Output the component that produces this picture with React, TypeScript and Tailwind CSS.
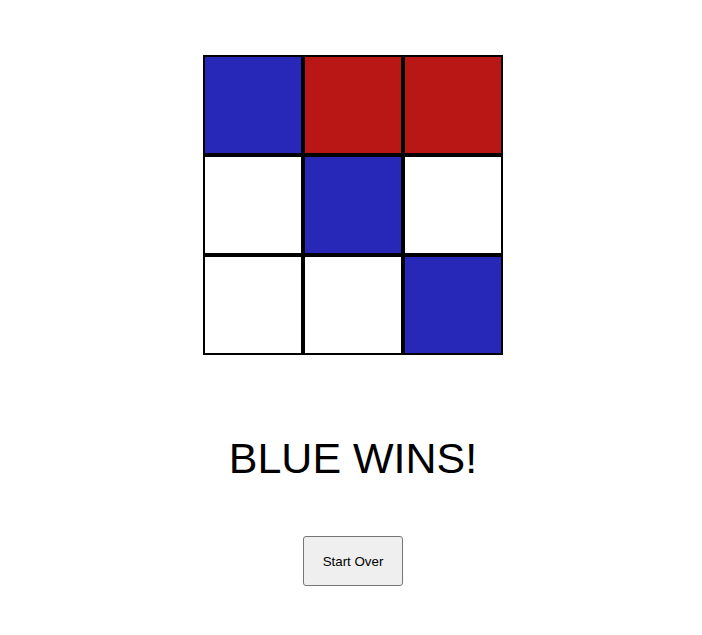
import React from "react";

const cells = ["blue", "red", "red", "", "blue", "", "", "", "blue"];

export default function App() {
  return (
    <div className="min-h-[635px] w-full bg-white flex flex-col items-center pt-[55px] pl-[4px]" style={{ fontFamily: '"Liberation Sans", Arial, sans-serif' }}>
      <div className="grid grid-cols-[100px_100px_100px] grid-rows-[100px_100px_100px]">
        {cells.map((c, i) => (
          <div
            key={i}
            className={
              "box-border border-2 border-black " +
              (c === "blue" ? "bg-[#2727b8]" : c === "red" ? "bg-[#b91616]" : "bg-white")
            }
          />
        ))}
      </div>
      <h1 className="mt-[76px] text-[43px] leading-[54px] text-black font-normal">BLUE WINS!</h1>
      <button className="mt-[51px] w-[100px] h-[50px] bg-[#efefef] border border-[#767676] rounded-[3px] text-[13.33px] pt-[1px] text-black">
        Start Over
      </button>
    </div>
  );
}
